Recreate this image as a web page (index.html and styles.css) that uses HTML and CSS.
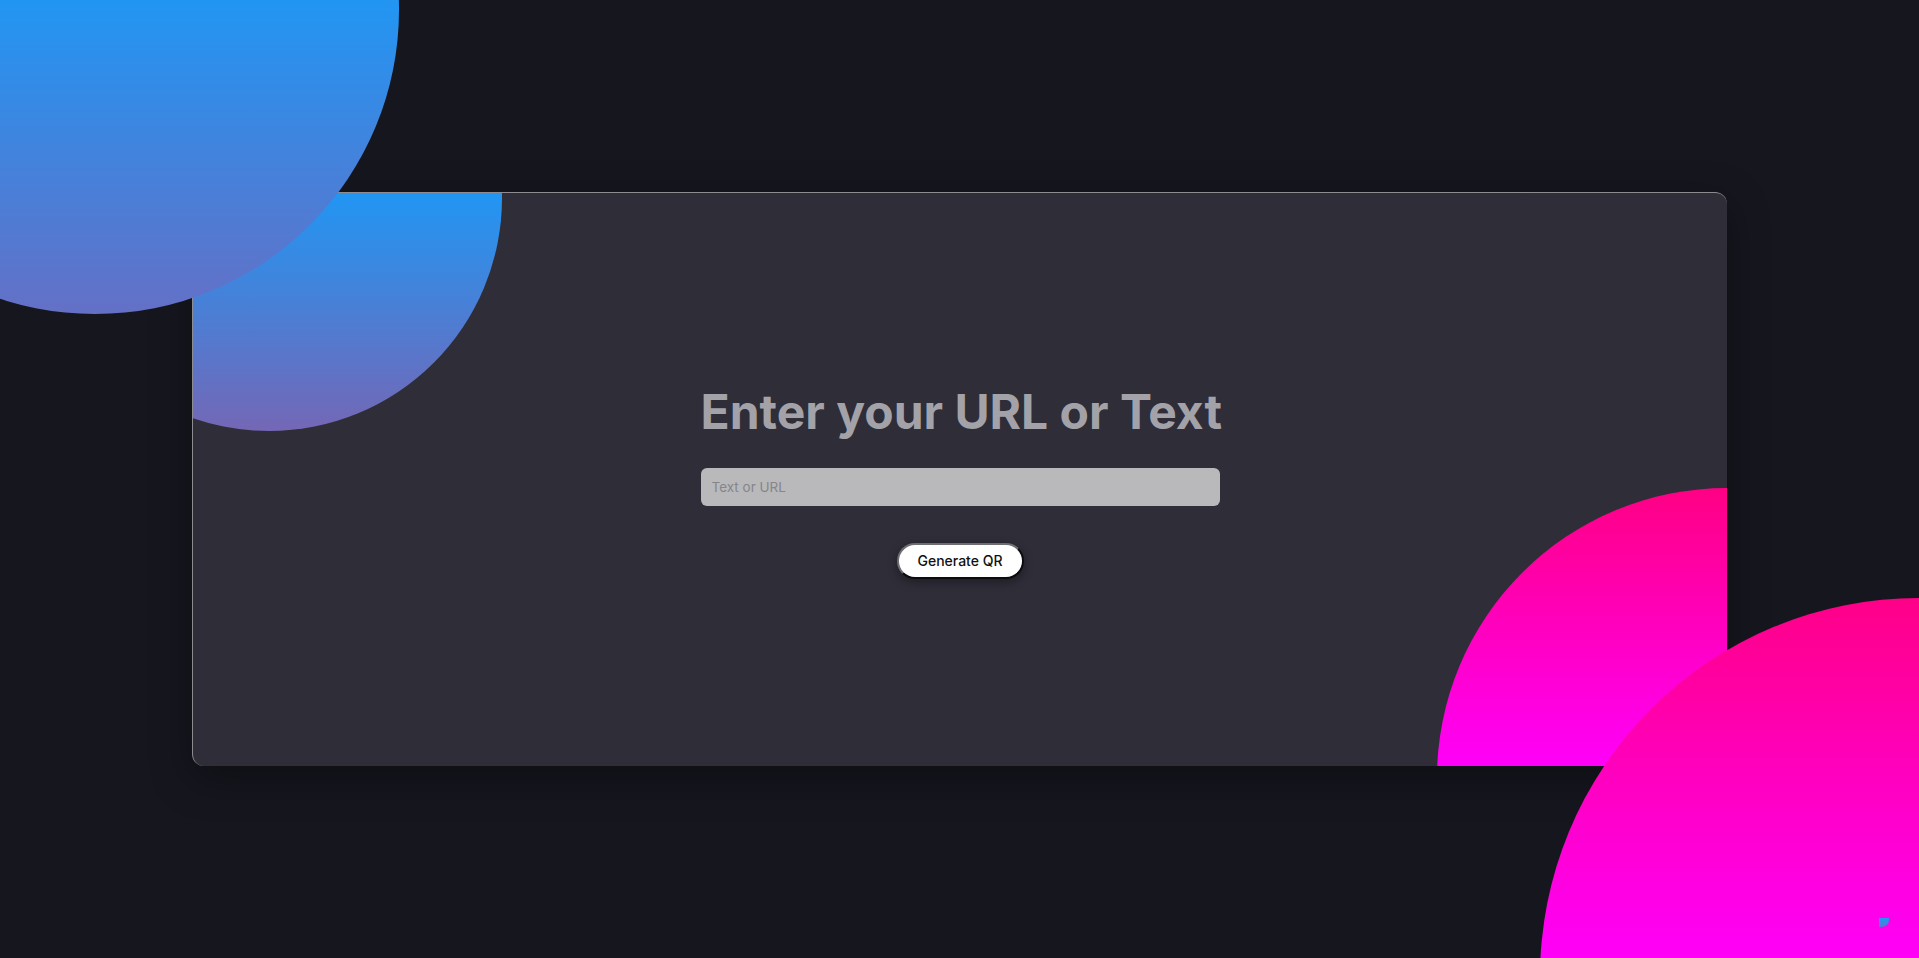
FILE: index.html
```html
<!DOCTYPE html>
<html lang="en">
<head>
<meta charset="utf-8">
<title>QR Code Generator</title>
<link rel="stylesheet" href="styles.css">
</head>
<body>
<div class="page">
  <div class="bubble bubble-tl"></div>
  <main class="card">
    <div class="card-bubble card-bubble-tl"></div>
    <div class="card-bubble card-bubble-br"></div>
    <form class="qr-form">
      <h1 class="title">Enter your URL or Text</h1>
      <input class="qr-input" type="text" placeholder="Text or URL">
      <button class="qr-button" type="button">Generate QR</button>
    </form>
  </main>
  <div class="bubble bubble-br"></div>
  <div class="mini-mark"></div>
</div>
</body>
</html>
```
FILE: styles.css
```css
* {
  box-sizing: border-box;
}

html,
body {
  margin: 0;
  height: 100%;
}

body {
  background: #16161f;
  font-family: "Inter", "Liberation Sans", sans-serif;
  overflow: hidden;
}

.page {
  position: relative;
  height: 100vh;
  display: flex;
  align-items: center;
  justify-content: center;
  overflow: hidden;
}

.card {
  position: relative;
  width: 80vw;
  height: 60vh;
  background: #2e2d38;
  border-top: 1px solid rgba(255, 255, 255, 0.45);
  border-left: 1px solid rgba(255, 255, 255, 0.45);
  border-radius: 12px;
  box-shadow: 0 12px 40px rgba(0, 0, 0, 0.38);
  overflow: hidden;
  display: flex;
  align-items: center;
  justify-content: center;
  padding-top: 3px;
}

.bubble,
.card-bubble {
  position: absolute;
  border-radius: 50%;
}

.bubble {
  z-index: 2;
}

.bubble-tl {
  left: -209px;
  top: -294px;
  width: 608px;
  height: 608px;
  background: linear-gradient(#2196f3 48%, #6470c6 100%);
}

.bubble-br {
  left: 1540px;
  top: 598px;
  width: 758px;
  height: 758px;
  background: linear-gradient(#ff0088 0%, #ff00ff 50%);
}

.card-bubble-tl {
  left: -157px;
  top: -228px;
  width: 466px;
  height: 466px;
  background: linear-gradient(#2196f3 49%, #7467b6 100%);
}

.card-bubble-br {
  left: calc(100% - 290px);
  top: calc(100% - 278px);
  width: 580px;
  height: 580px;
  background: linear-gradient(#ff0084 0%, #ff00fa 48%);
}

.qr-form {
  position: relative;
  z-index: 1;
  width: 519px;
  display: flex;
  flex-direction: column;
  align-items: center;
}

.title {
  margin: 0 0 27px;
  width: 100%;
  text-align: center;
  font-size: 48px;
  line-height: 1.2;
  font-weight: 700;
  letter-spacing: 0;
  color: #a3a2a8;
  white-space: nowrap;
}

.qr-input {
  width: 100%;
  height: 38px;
  border: none;
  border-radius: 6px;
  background: #b9b9bb;
  padding: 0 11px;
  font-family: "Inter", "Liberation Sans", sans-serif;
  font-size: 13.5px;
  color: #333;
  outline: none;
}

.qr-input::placeholder {
  color: #86858a;
}

.qr-button {
  margin-top: 37px;
  width: 127px;
  height: 36px;
  border-radius: 18px;
  border: 2px solid;
  border-color: #6d6d72 #0c0c10 #0c0c10 #6d6d72;
  background: #ffffff;
  color: #111;
  font-family: "Inter", "Liberation Sans", sans-serif;
  font-size: 14px;
  font-weight: 500;
  box-shadow: 0 3px 10px rgba(0, 0, 0, 0.35);
  cursor: pointer;
}

.mini-mark {
  position: absolute;
  z-index: 3;
  left: 1879px;
  top: 918px;
  width: 10px;
  height: 9px;
  border-bottom-right-radius: 8px 7px;
  background: linear-gradient(#2196f3, #4f7bd6);
}
```
